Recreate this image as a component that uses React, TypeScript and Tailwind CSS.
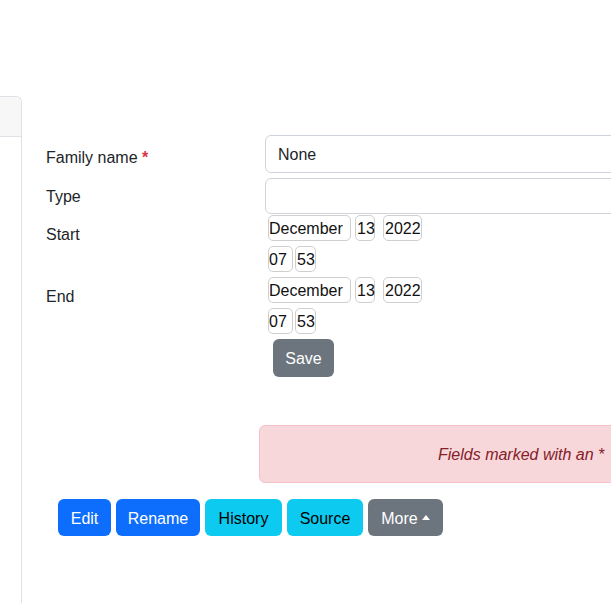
import React from "react";

function Box({ w, className = "", children }: { w: string; className?: string; children: React.ReactNode }) {
  return (
    <span
      className={`inline-flex h-[26px] items-center pt-[2px] border border-[#cfcfcf] rounded-[5px] leading-none text-[#111] ${w} ${className}`}
    >
      {children}
    </span>
  );
}

function DateTime() {
  return (
    <div className="flex flex-col gap-[5px] pl-[3px]">
      <div className="flex">
        <Box w="w-[83px]">December</Box>
        <Box w="w-[20px]" className="ml-[4px] pl-[1px]">13</Box>
        <Box w="w-[39px]" className="ml-[8px] pl-[1px]">2022</Box>
      </div>
      <div className="flex">
        <Box w="w-[25px]">07</Box>
        <Box w="w-[21px]" className="ml-[2px] pl-[1px]">53</Box>
      </div>
    </div>
  );
}

const btn = "h-[37px] pt-[2px] rounded-[6px] flex items-center justify-center";

export default function App() {
  return (
    <div className="w-[611px] h-[603px] overflow-hidden bg-white text-[16px] text-[#212529] font-['Liberation_Sans',Arial,sans-serif]">
      <div className="flex h-full">
        {/* sidebar card */}
        <div className="w-[22px] shrink-0 mt-[96px] border-r border-t border-[#dee2e6] rounded-tr-[6px]">
          <div className="h-[40px] bg-[#f7f7f7] border-b border-[#dee2e6] rounded-tr-[6px]" />
        </div>

        {/* main form */}
        <div className="flex-1 pt-[135px] pl-[24px]">
          <div className="flex">
            <div className="w-[219px] shrink-0 pt-[11px] leading-[24px]">
              Family name <span className="text-[#dc3545] font-bold">*</span>
            </div>
            <div className="h-[38px] w-[420px] shrink-0 border border-[#ced4da] rounded-[6px] px-[12px] pt-[2px] flex items-center">
              None
            </div>
          </div>

          <div className="flex mt-[5px]">
            <div className="w-[219px] shrink-0 pt-[7px] leading-[24px]">Type</div>
            <div className="h-[36px] w-[420px] shrink-0 border border-[#ced4da] rounded-[6px]" />
          </div>

          <div className="flex mt-[1px]">
            <div className="w-[219px] shrink-0 pt-[8px] leading-[24px]">Start</div>
            <DateTime />
          </div>

          <div className="flex mt-[5px]">
            <div className="w-[219px] shrink-0 pt-[8px] leading-[24px]">End</div>
            <DateTime />
          </div>

          <div className="ml-[227px] mt-[5px]">
            <button className={`w-[61px] h-[38px] bg-[#6c757d] text-white ${btn}`}>Save</button>
          </div>

          <div className="ml-[213px] mt-[48px] h-[58px] w-[420px] bg-[#f8d7da] border border-[#f5c2c7] rounded-[6px] text-[#842029] italic flex items-center pt-[2px] pl-[178px] whitespace-nowrap">
            Fields marked with an *
          </div>

          <div className="ml-[12px] mt-[16px] flex gap-[5px]">
            <button className={`w-[53px] bg-[#0d6efd] text-white ${btn}`}>Edit</button>
            <button className={`w-[84px] bg-[#0d6efd] text-white ${btn}`}>Rename</button>
            <button className={`w-[77px] bg-[#0dcaf0] text-black ${btn}`}>History</button>
            <button className={`w-[76px] bg-[#0dcaf0] text-black ${btn}`}>Source</button>
            <button className={`w-[75px] bg-[#6c757d] text-white ${btn}`}>
              More
              <span className="ml-[4px] mb-[2px] w-0 h-0 border-l-[4px] border-r-[4px] border-b-[5px] border-l-transparent border-r-transparent border-b-white" />
            </button>
          </div>
        </div>
      </div>
    </div>
  );
}
